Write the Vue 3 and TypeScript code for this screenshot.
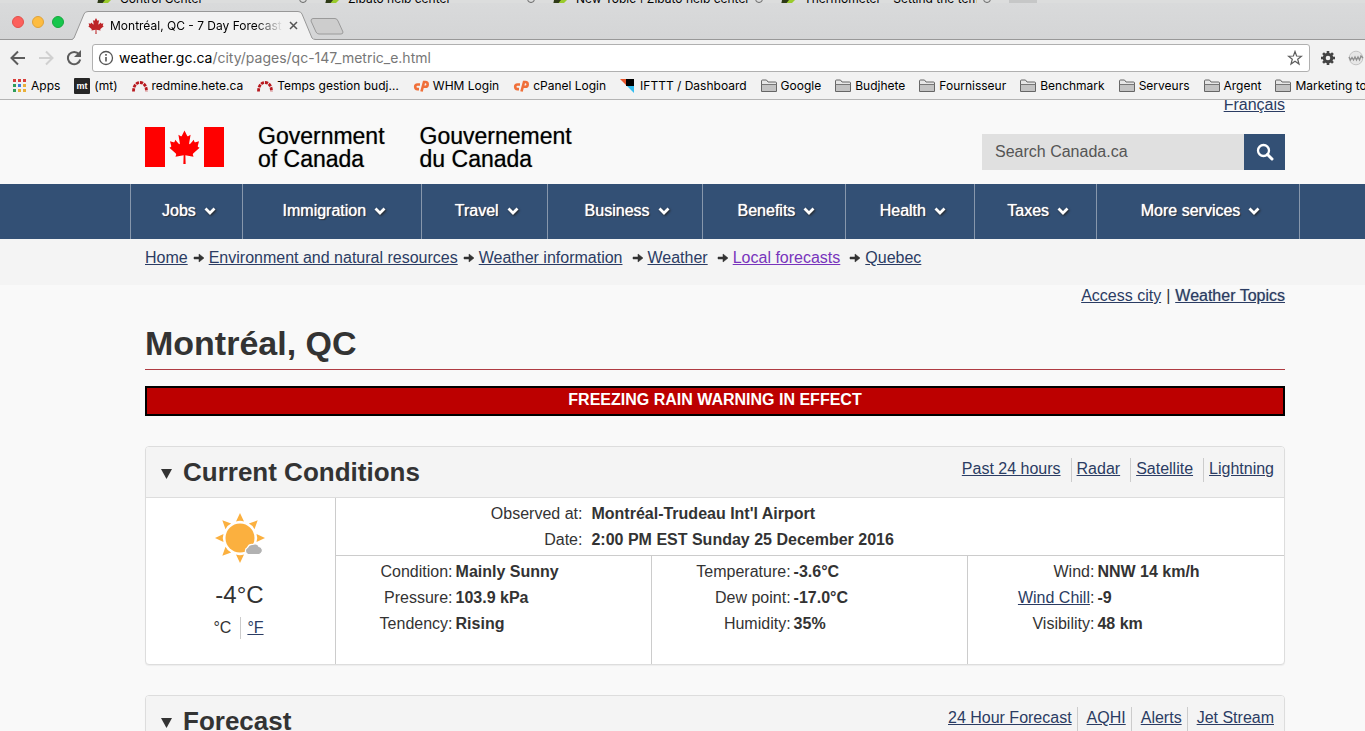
<script setup lang="ts">
import { ref } from 'vue'

interface Bookmark { label: string; icon: string }
interface Item { label: string; value: string; link?: boolean }

const bookmarks: Bookmark[] = [
  { label: 'Apps', icon: 'apps' },
  { label: '(mt)', icon: 'mt' },
  { label: 'redmine.hete.ca', icon: 'redmine' },
  { label: 'Temps gestion budj…', icon: 'redmine' },
  { label: 'WHM Login', icon: 'cp' },
  { label: 'cPanel Login', icon: 'cp' },
  { label: 'IFTTT / Dashboard', icon: 'ifttt' },
  { label: 'Google', icon: 'folder' },
  { label: 'Budjhete', icon: 'folder' },
  { label: 'Fournisseur', icon: 'folder' },
  { label: 'Benchmark', icon: 'folder' },
  { label: 'Serveurs', icon: 'folder' },
  { label: 'Argent', icon: 'folder' },
  { label: 'Marketing tools', icon: 'folder' },
]
const appDots = ['#d93f3c', '#d93f3c', '#d93f3c', '#2f9e5b', '#3b7de0', '#e9b03a', '#2f9e5b', '#e9b03a', '#e9b03a']
const backTabs = ['Control Center', 'Zipato help center', 'New Topic | Zipato help center', 'Thermometer - Setting the tem']
const menu = ['Jobs', 'Immigration', 'Travel', 'Business', 'Benefits', 'Health', 'Taxes', 'More services']
const crumbs = ['Home', 'Environment and natural resources', 'Weather information', 'Weather', 'Local forecasts', 'Quebec']
const observed: Item[] = [
  { label: 'Observed at:', value: "Montréal-Trudeau Int'l Airport" },
  { label: 'Date:', value: '2:00 PM EST Sunday 25 December 2016' },
]
const columns: Item[][] = [
  [
    { label: 'Condition', value: 'Mainly Sunny' },
    { label: 'Pressure', value: '103.9 kPa' },
    { label: 'Tendency', value: 'Rising' },
  ],
  [
    { label: 'Temperature', value: '-3.6°C' },
    { label: 'Dew point', value: '-17.0°C' },
    { label: 'Humidity', value: '35%' },
  ],
  [
    { label: 'Wind', value: 'NNW 14 km/h' },
    { label: 'Wind Chill', value: '-9', link: true },
    { label: 'Visibility', value: '48 km' },
  ],
]
const conditionLinks = ['Past 24 hours', 'Radar', 'Satellite', 'Lightning']
const forecastLinks = ['24 Hour Forecast', 'AQHI', 'Alerts', 'Jet Stream']
const query = ref('')
const rays = [0, 45, 90, 180, 225, 270, 315]
const leaf = 'M50 0 L41 17 Q39 20 36 18 L29 14 L34 41 Q34 46 30 43 L18 30 L16 36 Q15 38 12 38 L0 35 L4 49 Q5 52 3 53 L-2 56 L20 74 Q22 76 21 78 L19 85 L47 80 L46 108 L54 108 L53 80 L81 85 L79 78 Q78 76 80 74 L102 56 L97 53 Q95 52 96 49 L100 35 L88 38 Q85 38 84 36 L82 30 L70 43 Q66 46 66 41 L71 14 L64 18 Q61 20 59 17 Z'
</script>

<template>
  <div class="window">
    <div class="chrome">
      <div class="back-tabs" aria-hidden="true">
        <div v-for="t in backTabs" :key="t" class="back-tab">
          <svg class="back-icon" width="16" height="6" viewBox="0 0 16 6"><path d="M2 0h12l-5 5H0z" fill="#9acb2c" /><path d="M1 0h7L4 5H0z" fill="#2e3a17" /></svg>
          <span class="back-label">{{ t }}</span>
          <span class="back-close"></span>
        </div>
        <span class="back-new"></span>
      </div>
      <div class="strip">
        <div class="lights">
          <button class="light red" aria-label="Close window"></button>
          <button class="light yellow" aria-label="Minimize window"></button>
          <button class="light green" aria-label="Zoom window"></button>
        </div>
        <div class="tab">
          <svg class="tab-shape" viewBox="0 0 244 29" width="244" height="29"><path d="M0 29 L2 27 L12 3 Q13 .5 16 .5 H226 Q229 .5 230 3 L240 27 L244 29Z" fill="#f2f2f2" /><path d="M0 28.5 L2 27 L12 3 Q13 .5 16 .5 H226 Q229 .5 230 3 L240 27 Q241 28.5 244 28.5" fill="none" stroke="#989898" /></svg>
          <div class="tab-inner">
            <svg viewBox="-4 0 108 108" width="16" height="16"><path :d="leaf" fill="#bd2427" /></svg>
            <span class="tab-title">Montréal, QC - 7 Day Forecast</span>
            <button class="plain" aria-label="Close tab"><svg width="9" height="9" viewBox="0 0 9 9"><path d="M1 1l7 7M8 1L1 8" stroke="#555" stroke-width="1.5" /></svg></button>
          </div>
        </div>
        <button class="plain new-tab" aria-label="New tab"><svg width="34" height="17" viewBox="0 0 34 17"><path d="M3 .5H25Q27 .5 28 3L33 14Q33 16 31 16H9Q7 16 6 14L1 3Q1 .5 3 .5Z" fill="#cdcdcd" stroke="#9a9a9a" /></svg></button>
      </div>
      <div class="toolbar">
        <button class="plain" aria-label="Back"><svg width="16" height="16" viewBox="0 0 16 16" fill="none" stroke="#5c5c5c" stroke-width="2"><path d="M15 8H2M8 1.5L1.5 8L8 14.5" /></svg></button>
        <button class="plain" aria-label="Forward"><svg width="16" height="16" viewBox="0 0 16 16" fill="none" stroke="#d0d0d0" stroke-width="2"><path d="M1 8H14M8 1.5L14.5 8L8 14.5" /></svg></button>
        <button class="plain" aria-label="Reload"><svg width="16" height="16" viewBox="0 0 16 16"><path d="M13 4.2A6.2 6.2 0 1 0 14.2 9.5" fill="none" stroke="#5c5c5c" stroke-width="2" /><path d="M15 0V7H8Z" fill="#5c5c5c" /></svg></button>
        <div class="address">
          <svg width="16" height="16" viewBox="0 0 16 16"><circle cx="8" cy="8" r="6.5" fill="none" stroke="#555" stroke-width="1.3" /><path d="M8 7v4.5M8 4v1.7" stroke="#555" stroke-width="1.6" /></svg>
          <span class="url"><b>weather.gc.ca</b>/city/pages/qc-147_metric_e.html</span>
          <button class="plain" aria-label="Bookmark this page"><svg width="16" height="16" viewBox="0 0 16 16"><path d="M8 1.5L9.6 6L14.5 6.2L10.7 9.2L12 14L8 11.2L4 14L5.3 9.200L1.500 6.200L6.400 6Z" fill="none" stroke="#5c5c5c" stroke-width="1.2" /></svg></button>
        </div>
        <button class="plain gear" aria-label="Settings"><svg width="16" height="16" viewBox="-8 -8 16 16"><circle r="3.8" fill="none" stroke="#444" stroke-width="3" /><rect v-for="a in 8" :key="a" x="-1.300" y="-7" width="2.600" height="3" fill="#444" :transform="`rotate(${a * 45})`" /></svg></button>
        <button class="plain www" aria-label="Web extension"><svg width="16" height="16" viewBox="0 0 16 16"><circle cx="8" cy="8" r="6.8" fill="#e6e6e6" stroke="#c4c4c4" /><path d="M1 7l1.500 3L4 7.500L5.500 10L7 7l1.500 3L10 7l1.500 3L13 6l2 2" fill="none" stroke="#8e8e8e" stroke-width="1.3" /></svg></button>
      </div>
      <nav class="bookmarks" aria-label="Bookmarks">
        <a v-for="b in bookmarks" :key="b.label" href="#" class="bookmark">
          <svg v-if="b.icon === 'apps'" width="16" height="16" viewBox="0 0 16 16"><rect v-for="(c, i) in appDots" :key="i" :x="2 + (i % 3) * 5" :y="1 + Math.floor(i / 3) * 5" width="3" height="3" :fill="c" /></svg>
          <svg v-else-if="b.icon === 'mt'" width="16" height="16" viewBox="0 0 16 16"><rect width="16" height="16" rx="1" fill="#262626" /><text x="8" y="11" text-anchor="middle" class="mt">mt</text></svg>
          <svg v-else-if="b.icon === 'redmine'" width="16" height="16" viewBox="0 0 16 16"><path d="M1.500 13.500C1.500 8 4 4.500 8 4.500S14.500 8 14.500 13.500" fill="none" stroke="#b8191f" stroke-width="2.800" stroke-dasharray="3.200 .900" /></svg>
          <svg v-else-if="b.icon === 'cp'" width="16" height="16" viewBox="0 0 16 16" fill="none" stroke="#f0703a" stroke-width="2.600"><path d="M7 6.500H4.500a2.300 2.300 0 0 0 0 4.600H6M8.500 13.500L11 4H12.300a2.400 2.400 0 0 1 0 4.800H10.500" /></svg>
          <svg v-else-if="b.icon === 'ifttt'" width="16" height="16" viewBox="0 0 16 16"><path d="M0 1H7V8Z" fill="#e9562b" /><path d="M6 1H14V8H6Z" fill="#000" /><path d="M7 8H14V15Z" fill="#33bdf0" /></svg>
          <svg v-else width="16" height="16" viewBox="0 0 16 16"><path d="M.5 13.500V3Q.5 2 1.500 2H5.500L7 4H14.500Q15.500 4 15.500 5V13.500Z" fill="#e6e6e6" stroke="#666" /><path d="M1 6H15V13H1Z" fill="#c3c3c3" /><path d="M.5 6.500H15.500" stroke="#777" /></svg>
          <span>{{ b.label }}</span>
        </a>
      </nav>
    </div>

    <header class="site-header">
      <div class="lang"><a href="#">Français</a></div>
      <div class="brand-row">
        <a href="#" class="brand" aria-label="Government of Canada">
          <svg width="79" height="40" viewBox="0 0 79 40"><path d="M0 0h20v40H0zM59 0h20v40H59z" fill="#f00" /><path :d="leaf" fill="#f00" transform="translate(25 3.5) scale(.29 .31)" /></svg>
          <span class="brand-name en">Government<br />of Canada</span>
          <span class="brand-name">Gouvernement<br />du Canada</span>
        </a>
        <form class="search" @submit.prevent>
          <input v-model="query" type="search" aria-label="Search Canada.ca" placeholder="Search Canada.ca" />
          <button aria-label="Search"><svg width="18" height="18" viewBox="0 0 18 18" fill="none" stroke="#fff"><circle cx="7.500" cy="7.500" r="5.500" stroke-width="2.300" /><path d="M11.500 11.500L16 16" stroke-width="3" stroke-linecap="round" /></svg></button>
        </form>
      </div>
    </header>

    <nav class="menu" aria-label="Site menu">
      <ul>
        <li v-for="m in menu" :key="m"><a href="#">{{ m }}<svg width="12" height="8" viewBox="0 0 12 8"><path d="M1.500 1.500L6 6L10.500 1.500" fill="none" stroke="#fff" stroke-width="2.800" /></svg></a></li>
      </ul>
    </nav>

    <nav class="crumbs" aria-label="Breadcrumb">
      <ol>
        <li v-for="(c, i) in crumbs" :key="c" :class="{ spaced: i > 2 }">
          <svg v-if="i" width="12" height="10" viewBox="0 0 12 10"><path d="M1 4H6V1L11 5L6 9V6H1Z" fill="#333" stroke="#333" stroke-width=".5" /></svg>
          <a href="#" :class="{ visited: c === 'Local forecasts' }">{{ c }}</a>
        </li>
      </ol>
    </nav>

    <main>
      <p class="topics"><a href="#">Access city</a><span>|</span><a href="#" class="strong">Weather Topics</a></p>
      <h1>Montréal, QC</h1>
      <a href="#" class="warning">FREEZING RAIN WARNING IN EFFECT</a>

      <section class="panel">
        <div class="panel-head">
          <h2><svg width="11" height="10" viewBox="0 0 11 10"><path d="M0 0H11L5.500 10Z" fill="#333" /></svg>Current Conditions</h2>
          <ul class="links"><li v-for="l in conditionLinks" :key="l"><a href="#">{{ l }}</a></li></ul>
        </div>
        <div class="conditions">
          <div class="now">
            <svg width="50" height="50" viewBox="-25 -25 50 50" role="img" aria-label="Mainly Sunny">
              <path v-for="r in rays" :key="r" d="M-4 -16.500Q0 -18 4 -16.500L0 -25Z" fill="#fbb03f" :transform="`rotate(${r})`" />
              <circle r="14.500" fill="#fbb03f" />
              <path d="M8 16.500a3.800 3.800 0 0 1-.5-7a5 5 0 0 1 5-3a4.500 4.500 0 0 1 6.500 2a4 4 0 0 1 2 7a3 3 0 0 1-2 1Z" fill="#b2b2b2" stroke="#fff" stroke-width="1.200" />
            </svg>
            <p class="temp">-4°C</p>
            <p class="units"><span>°C</span><a href="#">°F</a></p>
          </div>
          <div class="details">
            <dl class="observed">
              <div v-for="o in observed" :key="o.label"><dt>{{ o.label }}</dt><dd>{{ o.value }}</dd></div>
            </dl>
            <div class="cols">
              <dl v-for="(col, i) in columns" :key="i">
                <div v-for="d in col" :key="d.label">
                  <dt><a v-if="d.link" href="#">{{ d.label }}</a><template v-else>{{ d.label }}</template>:</dt>
                  <dd>{{ d.value }}</dd>
                </div>
              </dl>
            </div>
          </div>
        </div>
      </section>

      <section class="panel">
        <div class="panel-head">
          <h2><svg width="11" height="10" viewBox="0 0 11 10"><path d="M0 0H11L5.500 10Z" fill="#333" /></svg>Forecast</h2>
          <ul class="links wide"><li v-for="l in forecastLinks" :key="l"><a href="#">{{ l }}</a></li></ul>
        </div>
      </section>
    </main>
  </div>
</template>

<style>
html, body { margin: 0; overflow: hidden; }
</style>

<style scoped>
* { box-sizing: border-box; }
.window { height: 100vh; overflow: hidden; background: #f9f9f9; color: #333; font: 16px/22px "Liberation Sans", Arial, sans-serif; }
ul, ol, dl, dd, p, h1, h2 { margin: 0; padding: 0; list-style: none; }
a { color: #2b3c63; }
svg { flex: none; display: block; }
.plain { border: 0; padding: 0; background: none; display: block; }

.chrome { font-family: Inter, Roboto, sans-serif; color: #000; }
.back-tabs { height: 3px; overflow: hidden; display: flex; background: #dcdddd; padding-left: 97px; }
.back-tab { display: flex; width: 228px; flex: none; }
.back-icon { margin-right: 7px; }
.back-label { font-size: 12px; line-height: 14px; margin-top: -8px; flex: 1; white-space: nowrap; overflow: hidden; }
.back-close { width: 8px; height: 8px; margin: -5px 18px 0 6px; border: 1px solid #666; border-radius: 4px; }
.back-new { width: 28px; height: 3px; background: #c6c7c7; }

.strip { height: 37px; background: linear-gradient(#d9dadb, #d4d5d6); border-bottom: 1px solid #989898; display: flex; align-items: flex-end; }
.lights { display: flex; gap: 8px; padding-left: 12px; align-self: flex-start; padding-top: 13px; width: 72px; }
.light { width: 12px; height: 12px; border-radius: 50%; padding: 0; border: 1px solid; }
.red { background: #fc605c; border-color: #e2504b; }
.yellow { background: #fdbc40; border-color: #dfa33a; }
.green { background: #16c64c; border-color: #17a83f; }
.tab { position: relative; width: 244px; height: 29px; margin-bottom: -1px; }
.tab-shape { position: absolute; inset: 0; }
.tab-inner { position: relative; display: flex; align-items: center; height: 29px; padding: 0 18px 0 16px; gap: 6px; }
.tab-title { flex: 1; overflow: hidden; white-space: nowrap; font-size: 12px; line-height: 16px; mask-image: linear-gradient(90deg, #000 84%, transparent); }
.new-tab { align-self: center; margin-left: -6px; margin-top: 10px; }

.toolbar { height: 33px; background: #f2f2f2; display: flex; align-items: center; gap: 12px; padding: 3px 0 0 10px; overflow: hidden; }
.address { flex: 1; height: 28px; margin-left: -2px; background: #fff; border: 1px solid #b0b0b0; border-radius: 3px; display: flex; align-items: center; gap: 5px; padding: 0 6px 0 5px; }
.url { flex: 1; font-size: 14px; line-height: 20px; color: #777; white-space: nowrap; }
.url b { color: #000; font-weight: 400; }
.gear { margin-left: -2px; }
.www { margin-right: 1px; }
.bookmarks { height: 27px; background: #f2f2f2; border-bottom: 1px solid #b4b4b4; display: flex; align-items: center; gap: 14px; padding-left: 11px; overflow: hidden; }
.bookmark { display: flex; flex: none; align-items: center; gap: 4px; font-size: 12px; line-height: 16px; color: #000; text-decoration: none; }
.mt { font: bold 9px "Liberation Sans", sans-serif; fill: #fff; }

.site-header { max-width: 1285px; margin-right: 80px; padding-left: 145px; height: 84px; overflow: hidden; }
.lang { display: flex; justify-content: flex-end; height: 27px; }
.lang a { margin-top: -6px; }
.brand-row { display: flex; justify-content: space-between; align-items: flex-start; }
.brand { display: flex; text-decoration: none; }
.brand-name { color: #000; font-size: 23px; line-height: 23px; margin-top: -2px; text-shadow: 0 0 1px #0008; }
.en { margin: -2px 35px 0 34px; }
.search { display: flex; margin-top: 7px; height: 36px; }
.search input { width: 262px; border: 0; border-radius: 0; background: #e0e0e0; padding: 0 13px; font: inherit; color: #555; outline: 0; appearance: none; }
.search input::placeholder { color: #555; opacity: 1; }
.search button { width: 41px; border: 0; padding: 0; background: #335075; display: grid; place-items: center; }

.menu { background: #335075; padding: 0 65px 0 130px; }
.menu ul { display: grid; max-width: 1170px; grid-template-columns: 112fr 179fr 126fr 155fr 144fr 129fr 122fr 203fr; border-left: 1px solid #8797ac; }
.menu li { border-right: 1px solid #8797ac; }
.menu a { height: 55px; display: flex; align-items: center; justify-content: center; gap: 8px; padding: 0 0 2px 5px; color: #fff; text-decoration: none; white-space: nowrap; text-shadow: 0 0 1px #fff, 1px 1px 1px #222; }
.menu svg { filter: drop-shadow(1px 1px 1px #222); }

.crumbs { background: #f4f4f4; height: 46px; padding: 8px 80px 0 145px; }
.crumbs ol { display: flex; white-space: nowrap; }
.crumbs li { display: flex; align-items: center; }
.crumbs svg { margin: 0 4px 0 5px; }
.crumbs .spaced { margin-left: 4px; }
.crumbs .visited { color: #7834bc; }

main { max-width: 1285px; margin-right: 80px; padding-left: 145px; }
.topics { text-align: right; }
.topics span { padding: 0 5px; }
.strong { text-shadow: 0 0 1px #8791a6; }
h1 { font-size: 34px; line-height: 38px; padding: 17px 0 7px; border-bottom: 1px solid #af3c43; }
.warning { display: block; margin: 16px 0 30px; height: 30px; border: 2px solid #000; background: #bc0000; color: #fff; font-weight: bold; text-align: center; text-decoration: none; line-height: 24px; }
.panel { border: 1px solid #ddd; border-radius: 4px; background: #fff; margin-bottom: 30px; overflow: hidden; box-shadow: 0 1px 1px #0000000d; }
.panel-head { display: flex; justify-content: space-between; align-items: flex-start; background: #f4f4f4; border-bottom: 1px solid #ddd; height: 51px; padding: 11px 0 0 15px; }
h2 { display: flex; align-items: center; font-size: 26px; line-height: 28px; }
h2 svg { margin: 4px 11px 0 0; }
.links { display: flex; }
.links li { height: 24px; padding: 0 10px 0 5px; border-left: 1px solid #ccc; }
.links li:first-child { border: 0; }
.wide li { padding-left: 9px; }
.wide li:not(:last-child) { padding-right: 5px; }
.conditions { display: flex; min-height: 166px; }
.now { width: 190px; border-right: 1px solid #ccc; display: flex; flex-direction: column; align-items: center; padding: 15px 2px 0 0; }
.temp { font-size: 24px; line-height: 28px; margin-top: 18px; }
.units { display: flex; margin-top: 8px; }
.units span { padding-right: 9px; border-right: 1px solid #ccc; }
.units a { padding: 0 2px 0 6px; }
.details { flex: 1; display: flex; flex-direction: column; }
dl > div { display: flex; line-height: 26px; white-space: nowrap; }
dt { text-align: right; }
dd { font-weight: bold; }
.observed { padding: 3px 0 2px; border-bottom: 1px solid #ccc; }
.observed dt { width: 26%; }
.observed dd { padding-left: 9px; }
.cols { flex: 1; display: grid; grid-template-columns: 315fr 316fr 317fr; }
.cols dl { padding-top: 3px; border-left: 1px solid #ccc; }
.cols dl:first-child { border: 0; }
.cols dt { width: 37%; }
.cols dl:nth-child(2) dt { width: 44%; }
.cols dl:nth-child(3) dt { width: 40%; }
.cols dd { padding-left: 3px; }
</style>
